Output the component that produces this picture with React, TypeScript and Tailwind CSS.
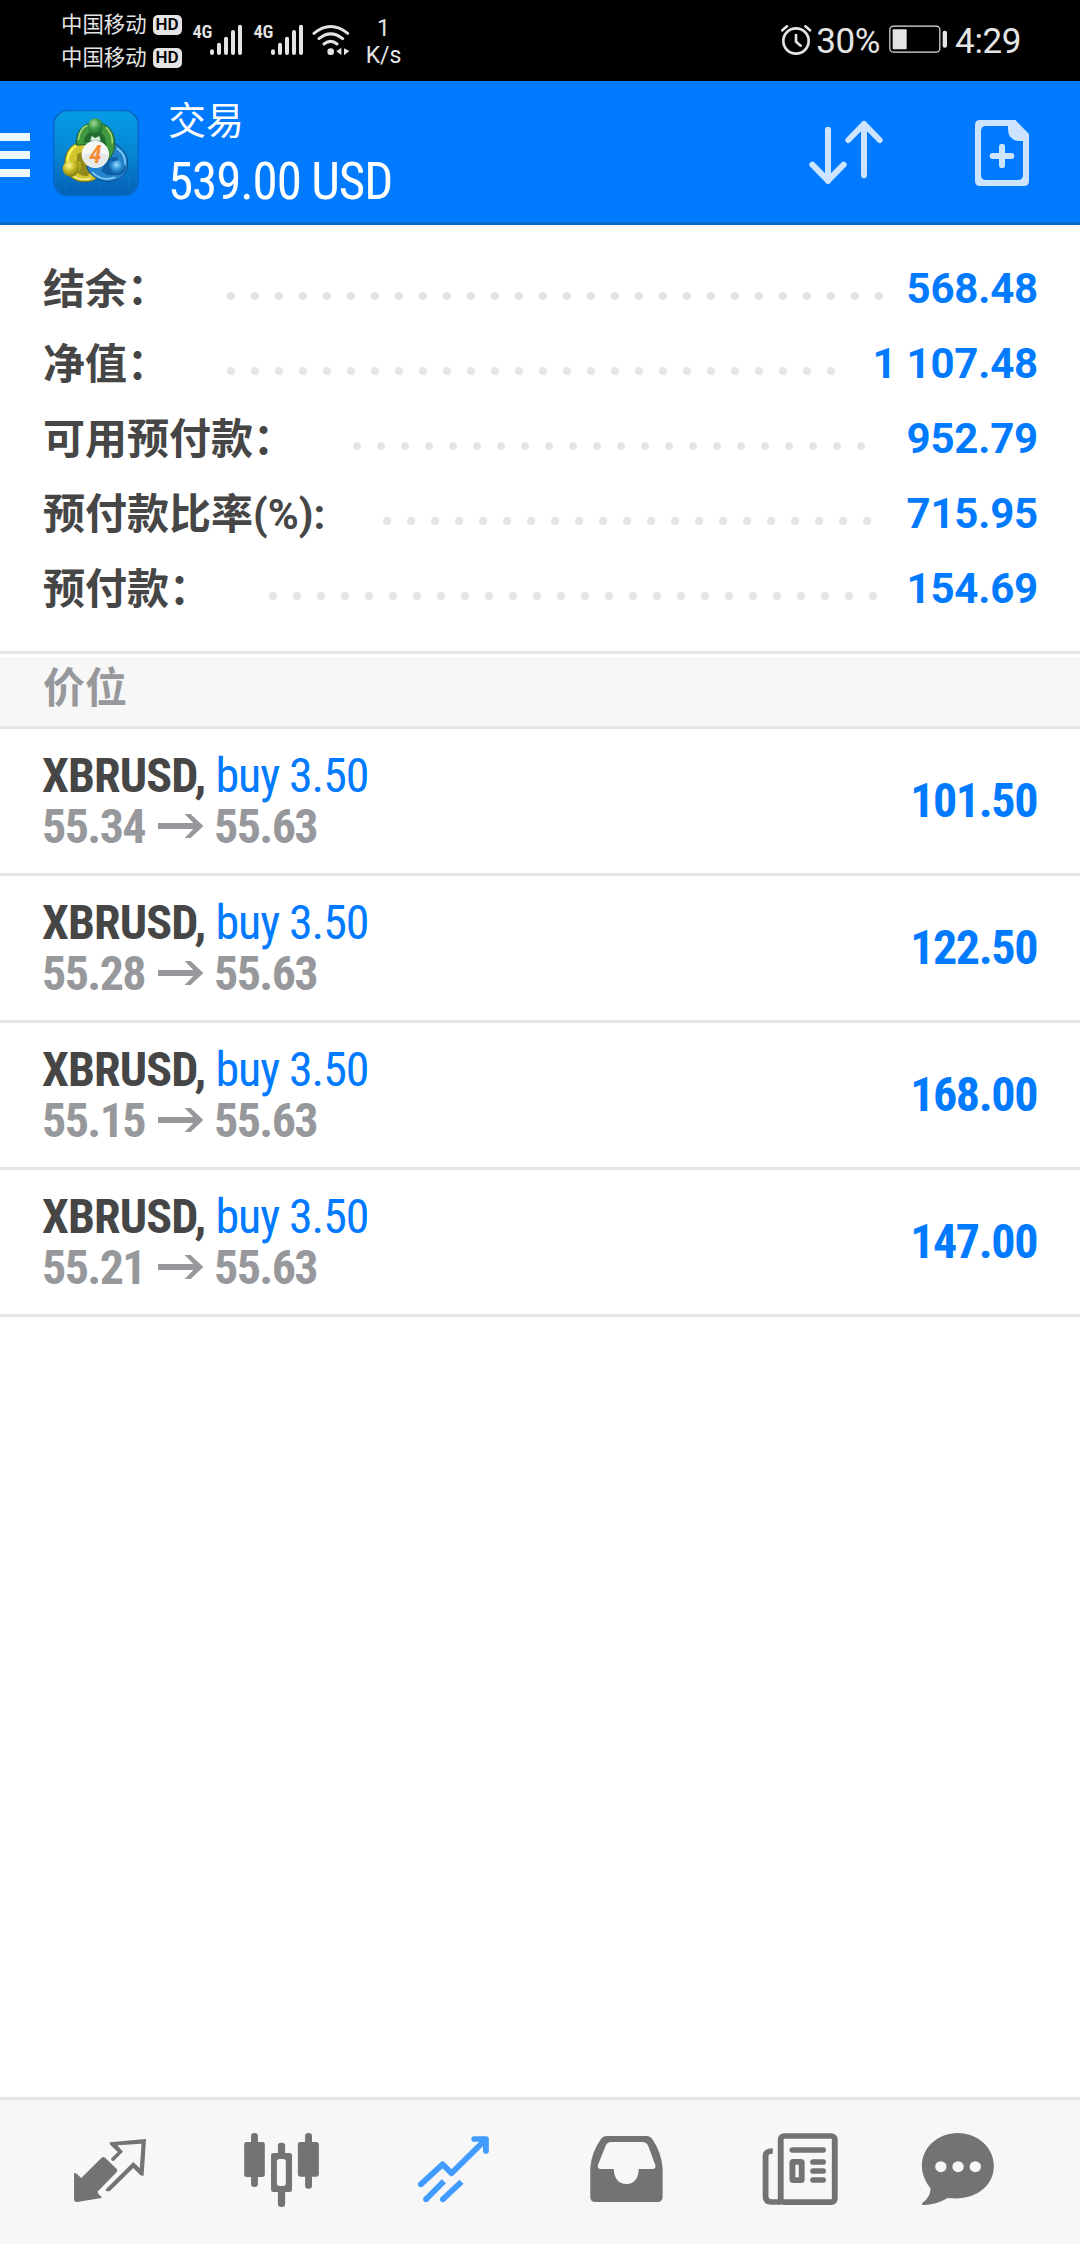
import type { ReactNode } from 'react'

interface Summary {
  label: string
  value: string
}

interface Position {
  symbol: string
  side: string
  open: string
  current: string
  profit: string
}

const SUMMARY: Summary[] = [
  { label: '结余：', value: '568.48' },
  { label: '净值：', value: '1 107.48' },
  { label: '可用预付款：', value: '952.79' },
  { label: '预付款比率(%):', value: '715.95' },
  { label: '预付款：', value: '154.69' },
]

const POSITIONS: Position[] = [
  { symbol: 'XBRUSD', side: 'buy 3.50', open: '55.34', current: '55.63', profit: '101.50' },
  { symbol: 'XBRUSD', side: 'buy 3.50', open: '55.28', current: '55.63', profit: '122.50' },
  { symbol: 'XBRUSD', side: 'buy 3.50', open: '55.15', current: '55.63', profit: '168.00' },
  { symbol: 'XBRUSD', side: 'buy 3.50', open: '55.21', current: '55.63', profit: '147.00' },
]

const CONDENSED = "font-['Roboto_Condensed','Roboto','Noto_Sans_CJK_SC',sans-serif] font-stretch-condensed"

function Carrier() {
  return (
    <div className="flex h-[33px] items-center gap-[6px]">
      <span className="text-[21.4px] leading-[33px]">中国移动</span>
      <span className="flex h-5 w-[29px] items-center justify-center rounded-[5px] bg-[#e4e4e4] text-[17px] leading-none font-semibold text-black">
        HD
      </span>
    </div>
  )
}

function Signal() {
  return (
    <div className="flex h-8">
      <span className={`${CONDENSED} w-[17px] pl-px text-[18.5px] leading-4 font-semibold tracking-[-0.5px]`}>4G</span>
      <svg className="h-8 w-[34px]" viewBox="627 72 102 96" stroke="#e4e4e4" strokeWidth="12" strokeLinecap="round">
        <path d="M636 154V159M657 134V159M678 116V159M699 96V159M720 80V159" />
      </svg>
    </div>
  )
}

function StatusBar() {
  return (
    <div className="flex h-[81px] bg-black text-[#e4e4e4]">
      <div className="ml-[61px] flex flex-col pt-[8px]">
        <Carrier />
        <Carrier />
      </div>
      <div className="ml-[10px] flex gap-[10px] pt-6">
        <Signal />
        <Signal />
        <svg className="-ml-[2px] h-8 w-[38px]" viewBox="936 72 114 96" fill="none" stroke="#e4e4e4" strokeWidth="9" strokeLinecap="round">
          <path d="M942 100Q992 59 1043 100M957 116Q992 87 1028 116M972 132Q992 116 1011 132" />
          <circle cx="992" cy="155" r="10" fill="#e4e4e4" stroke="none" />
          <path d="M1024 143V165L1009 154ZM1032 145V166L1048 153Z" fill="#e4e4e4" stroke="none" />
        </svg>
      </div>
      <div className="ml-[16px] w-[36px] pt-[15px] text-center text-[23px] leading-[27px]">
        <div>1</div>
        <div>K/s</div>
      </div>
      <div className="mr-[59px] ml-auto flex pt-[24px]">
        <svg className="h-8 w-8" viewBox="120 72 96 96" fill="none" stroke="#e4e4e4" strokeWidth="8" strokeLinecap="round">
          <circle cx="168" cy="123" r="38" />
          <path d="M168 105V125L182 137M127 91L141 79M196 79L210 91" />
        </svg>
        <span className="ml-[4px] text-[35px] leading-[35px] tracking-[-0.4px]">30%</span>
        <svg className="ml-[9px] h-8 w-[60px]" viewBox="447 76 180 96" fill="#e4e4e4">
          <rect x="449.500" y="82.500" width="150" height="78" rx="11" fill="none" stroke="#e4e4e4" strokeWidth="3.500" />
          <rect x="458" y="92" width="42" height="60" rx="3" />
          <rect x="608" y="96" width="13" height="51" rx="6" />
        </svg>
        <span className="ml-[6px] text-[35px] leading-[35px] tracking-[-0.4px]">4:29</span>
      </div>
    </div>
  )
}

function AppLogo() {
  return (
    <svg className="h-[86px] w-[86px]" viewBox="159 330 258 258">
      <defs>
        <linearGradient id="tile" x1="0" y1="0" x2="0" y2="1">
          <stop offset="0" stopColor="#069be6" />
          <stop offset="0.5" stopColor="#0685d2" />
          <stop offset="1" stopColor="#0561b8" />
        </linearGradient>
        <radialGradient id="green" cx="0.4" cy="0.3" r="0.7">
          <stop offset="0" stopColor="#a4dc9c" />
          <stop offset="0.5" stopColor="#3d9b47" />
          <stop offset="1" stopColor="#1d6b2d" />
        </radialGradient>
        <radialGradient id="gold" cx="0.4" cy="0.3" r="0.7">
          <stop offset="0" stopColor="#fff79a" />
          <stop offset="0.5" stopColor="#c9bd23" />
          <stop offset="1" stopColor="#807b18" />
        </radialGradient>
        <radialGradient id="azure" cx="0.4" cy="0.3" r="0.7">
          <stop offset="0" stopColor="#9bdcff" />
          <stop offset="0.5" stopColor="#2c8fd4" />
          <stop offset="1" stopColor="#0c5296" />
        </radialGradient>
      </defs>
      <rect x="159" y="330" width="258" height="258" rx="44" fill="#0867c4" />
      <rect x="163" y="334" width="250" height="250" rx="42" fill="url(#tile)" />
      <path d="M196 336V580M248 336V580M300 336V580M352 336V580M386 336V580M165 376H411M165 428H411M165 480H411M165 532H411" stroke="#38aef0" strokeWidth="1.500" opacity="0.2" />
      {/* yellow, blue and green figures joined in a ring */}
      <path d="M262 422C212 424 190 460 196 500C202 535 235 550 268 544C288 540 298 530 300 518L262 478Z" fill="#d0c52e" stroke="#6f6a12" strokeWidth="3" />
      <path d="M232 462L262 450L286 500L262 528C242 530 232 520 228 508Z" fill="#8f8a1a" />
      <path d="M256 429C224 430 202 456 203 486" fill="none" stroke="#fbf35c" strokeWidth="8" />
      <path d="M222 530Q244 542 272 535" fill="none" stroke="#eee98a" strokeWidth="5" />
      <path d="M340 428C376 446 390 478 380 510C370 540 330 552 300 540C276 530 264 514 260 500L310 490Z" fill="#2384cb" stroke="#0b4d8e" strokeWidth="3" />
      <path d="M324 474L352 470L356 520C340 530 318 528 304 512Z" fill="#0f5ea5" />
      <path d="M350 444C372 460 378 480 374 496M276 516Q304 546 346 532" fill="none" stroke="#83cdf5" strokeWidth="5" />
      <path d="M229 436C227 388 254 368 286 368C324 368 346 396 344 436C343 458 332 474 320 482L286 430L252 434Z" fill="#419a40" stroke="#1b602a" strokeWidth="3" />
      <path d="M250 428C254 402 268 392 286 392C308 392 322 412 320 444L286 424Z" fill="#236f31" />
      <path d="M235 420C238 394 248 382 262 376M318 382Q338 400 337 430" fill="none" stroke="#a4d779" strokeWidth="5" />
      <path d="M275 408L286 414L298 408L302 422H271Z" fill="#d5ecdc" />
      <path d="M218 486L240 482L246 502L236 516Z" fill="#aba31d" />
      <path d="M348 484L330 482L326 498L338 512Z" fill="#227bbd" />
      <ellipse cx="286" cy="380" rx="23" ry="25" fill="url(#green)" />
      <circle cx="212" cy="506" r="24" fill="url(#gold)" />
      <circle cx="354" cy="503" r="22" fill="url(#azure)" />
      <circle cx="286" cy="463" r="41" fill="#f6f6f6" />
      <path d="M246 468Q286 450 327 466A41 41 0 0 1 246 468Z" fill="#e6e8ea" />
      <text x="286" y="489" textAnchor="middle" fontSize="76" fontWeight="600" fontStyle="italic" fill="#f48c33" className={CONDENSED}>
        4
      </text>
    </svg>
  )
}

function AppBar() {
  return (
    <header className="flex h-36 border-b-[3px] border-[#0a6acb] bg-[#007aff]">
      <div className="flex w-[30px] flex-col gap-[10px] pt-[52px]">
        <div className="h-2 bg-[#eff7ff]" />
        <div className="h-2 bg-[#eff7ff]" />
        <div className="h-2 bg-[#eff7ff]" />
      </div>
      <div className="ml-[23px] pt-[29px]">
        <AppLogo />
      </div>
      <div className="ml-[29px] pt-[17px] whitespace-nowrap text-white">
        <div className="text-[38px] leading-[46px]">交易</div>
        <div className={`${CONDENSED} pt-[8px] text-[51px] leading-[60px] tracking-[-1.1px]`}>539.00 USD</div>
      </div>
      <div className="mr-[50px] ml-auto flex gap-[90px] pt-[38px]">
        <svg className="h-[67px] w-[76px]" viewBox="204 357 228 201" fill="none" stroke="#cce4ff" strokeWidth="18" strokeLinecap="round" strokeLinejoin="round">
          <path d="M264 389V543M217 494L264 542L311 494M372 526V372M325 420L372 372L419 420" />
        </svg>
        <svg className="h-[67px] w-[56px]" viewBox="702 357 168 201" fill="#cce4ff">
          <path fillRule="evenodd" d="M720 360H826L867 402V543Q867 558 852 558H720Q705 558 705 543V375Q705 360 720 360ZM739 378Q723 378 723 394V525Q723 540 739 540H833Q849 540 849 525V423H836Q804 420 804 388V378Z" />
          <path d="M786 440V496M758 468H814" stroke="#cce4ff" strokeWidth="18" strokeLinecap="round" />
        </svg>
      </div>
    </header>
  )
}

function SummaryRow({ label, value }: Summary) {
  return (
    <div className="flex h-[75px] items-center pr-[42px] pl-[43px] text-[42px] leading-[75px] font-bold whitespace-nowrap">
      <span className="pt-[2px] text-[#464646]">{label}</span>
      {/* dots that don't fit wrap to a hidden second line */}
      <div className="mt-[15px] mr-[19px] ml-[58px] flex h-2 flex-1 flex-wrap gap-x-4 gap-y-4 overflow-hidden">
        {Array.from({ length: 32 }, (_, i) => (
          <span key={i} className="h-2 w-2 rounded-full bg-[#e5e5e5]" />
        ))}
      </div>
      <span className="tracking-[-0.2px] text-[#007aff]">{value}</span>
    </div>
  )
}

function PositionRow({ symbol, side, open, current, profit }: Position) {
  return (
    <div className={`${CONDENSED} flex h-[147px] items-center justify-between border-b-[3px] border-[#e5e5e5] pr-[43px] pl-[42px] text-[48px] leading-[51px] font-bold`}>
      <div>
        <div className="tracking-[-0.9px] text-[#464646]">
          {symbol}, <span className="font-normal tracking-[-1.1px] text-[#007aff]">{side}</span>
        </div>
        <div className="flex tracking-[-1.6px] text-[#97989c]">
          {open}
          <svg className="mt-[13px] mr-[10px] ml-[13px] h-6 w-[46px]" viewBox="474 552 138 72" fill="#97989c">
            <path d="M474 579H580L554 552H572L610 588L572 624H554L580 597H474Z" />
          </svg>
          {current}
        </div>
      </div>
      <div className="pb-[2px] tracking-[-1.4px] text-[#007aff]">{profit}</div>
    </div>
  )
}

function NavIcon({ viewBox, children }: { viewBox: string; children: ReactNode }) {
  return (
    <svg className="h-24 w-24" viewBox={viewBox} preserveAspectRatio="none" fill="currentColor">
      {children}
    </svg>
  )
}

function BottomNav() {
  return (
    <nav className="flex h-[147px] gap-[76px] border-t-[3px] border-[#e5e5e5] bg-[#f7f7f7] pt-[16px] pl-[62px] text-[#737373]">
      <NavIcon viewBox="180 108 278.8 288">
        <path d="M295 233Q300 229 305 233L339 267Q342 271 339 276L283 335L286 342L295 351V354L224 366Q215 366 215 357V279Q220 279 224 283L236 294Z" />
        <path fillRule="evenodd" d="M319 187L424 177L417 287Q410 288 406 284L387 264L320 332Q313 336 306 331L308 327L387 246L406 265L411 191L341 196L357 215L330 243Q324 244 322 236L342 216L320 194Q317 190 319 187Z" />
      </NavIcon>
      <NavIcon viewBox="679.5 108 278.8 288">
        <rect x="729" y="159" width="20" height="162" rx="9" />
        <rect x="709" y="186" width="60" height="105" rx="7" />
        <rect x="886" y="159" width="20" height="167" rx="9" />
        <rect x="865" y="186" width="61" height="104" rx="7" />
        <rect x="807" y="188" width="21" height="193" rx="9" />
        <rect x="787" y="219" width="61" height="117" rx="7" />
        <rect x="804" y="237" width="26" height="81" rx="8" fill="#f7f7f7" />
      </NavIcon>
      <NavIcon viewBox="1178.9 108 278.8 288">
        <g fill="none" stroke="#429cff" strokeWidth="17">
          <path d="M1222 313L1285 253L1311 280L1408 181" strokeLinejoin="round" strokeLinecap="round" />
          <path d="M1377 177H1411V213" strokeLinecap="round" strokeLinejoin="round" />
          <path d="M1237 358L1289 304M1286 358L1340 305" />
        </g>
        <g fill="#429cff">
          <circle cx="1237" cy="358" r="8.500" />
          <circle cx="1286" cy="358" r="8.500" />
          <path d="M1390 180H1415V205Z" />
        </g>
      </NavIcon>
      <NavIcon viewBox="110.3 108 278.8 288">
        <path d="M194 168H309Q320 168 326 177Q353 218 356 264V351Q356 366 341 366H161Q146 366 146 351V264Q149 218 177 177Q183 168 194 168Z" />
        <path d="M206 186H297Q309 186 314 197L335 256Q337 267 327 267H287Q285 311 251 312Q216 311 214 267H177Q166 267 168 256L190 199Q195 186 206 186Z" fill="#f7f7f7" />
      </NavIcon>
      <NavIcon viewBox="609.8 108 278.8 288">
        <g fill="none" stroke="currentColor" strokeWidth="17">
          <rect x="699" y="168" width="157" height="198.500" rx="10" />
          <path d="M676 213Q655 213 655 228V348Q655 366 672 366H700" />
          <path d="M733 210H822M793 246H822M793 273H822M793 300H822" strokeLinecap="round" />
          <rect x="733" y="245.500" width="27" height="55" rx="2" />
        </g>
      </NavIcon>
      <div className="-ml-[12px]">
        <NavIcon viewBox="1074.4 108 278.8 288">
          <path d="M1213 159C1270 159 1318 202 1318 258C1318 318 1264 364 1184 354Q1150 375 1114 375Q1106 375 1111 368Q1134 352 1134 325C1120 306 1109 284 1109 258C1109 202 1156 159 1213 159Z" />
          <g fill="#f7f7f7">
            <circle cx="1164" cy="260" r="16.500" />
            <circle cx="1214" cy="260" r="16.500" />
            <circle cx="1264" cy="260" r="16.500" />
          </g>
        </NavIcon>
      </div>
    </nav>
  )
}

export default function App() {
  return (
    <div className="flex h-[2244px] w-[1080px] flex-col overflow-hidden bg-white font-['Roboto','Noto_Sans_CJK_SC',sans-serif]">
      <StatusBar />
      <AppBar />
      <section className="h-[426px] pt-[26px]">
        {SUMMARY.map(row => (
          <SummaryRow key={row.label} {...row} />
        ))}
      </section>
      <div className="h-[78px] border-t-[3px] border-b-[3px] border-[#e5e5e5] pt-[3px]">
        <div className="h-[69px] bg-[#f7f7f7] pl-[43px] text-[42px] leading-[64px] font-bold text-[#97989c]">价位</div>
      </div>
      <main className="flex-1">
        {POSITIONS.map(p => (
          <PositionRow key={p.open} {...p} />
        ))}
      </main>
      <BottomNav />
    </div>
  )
}
